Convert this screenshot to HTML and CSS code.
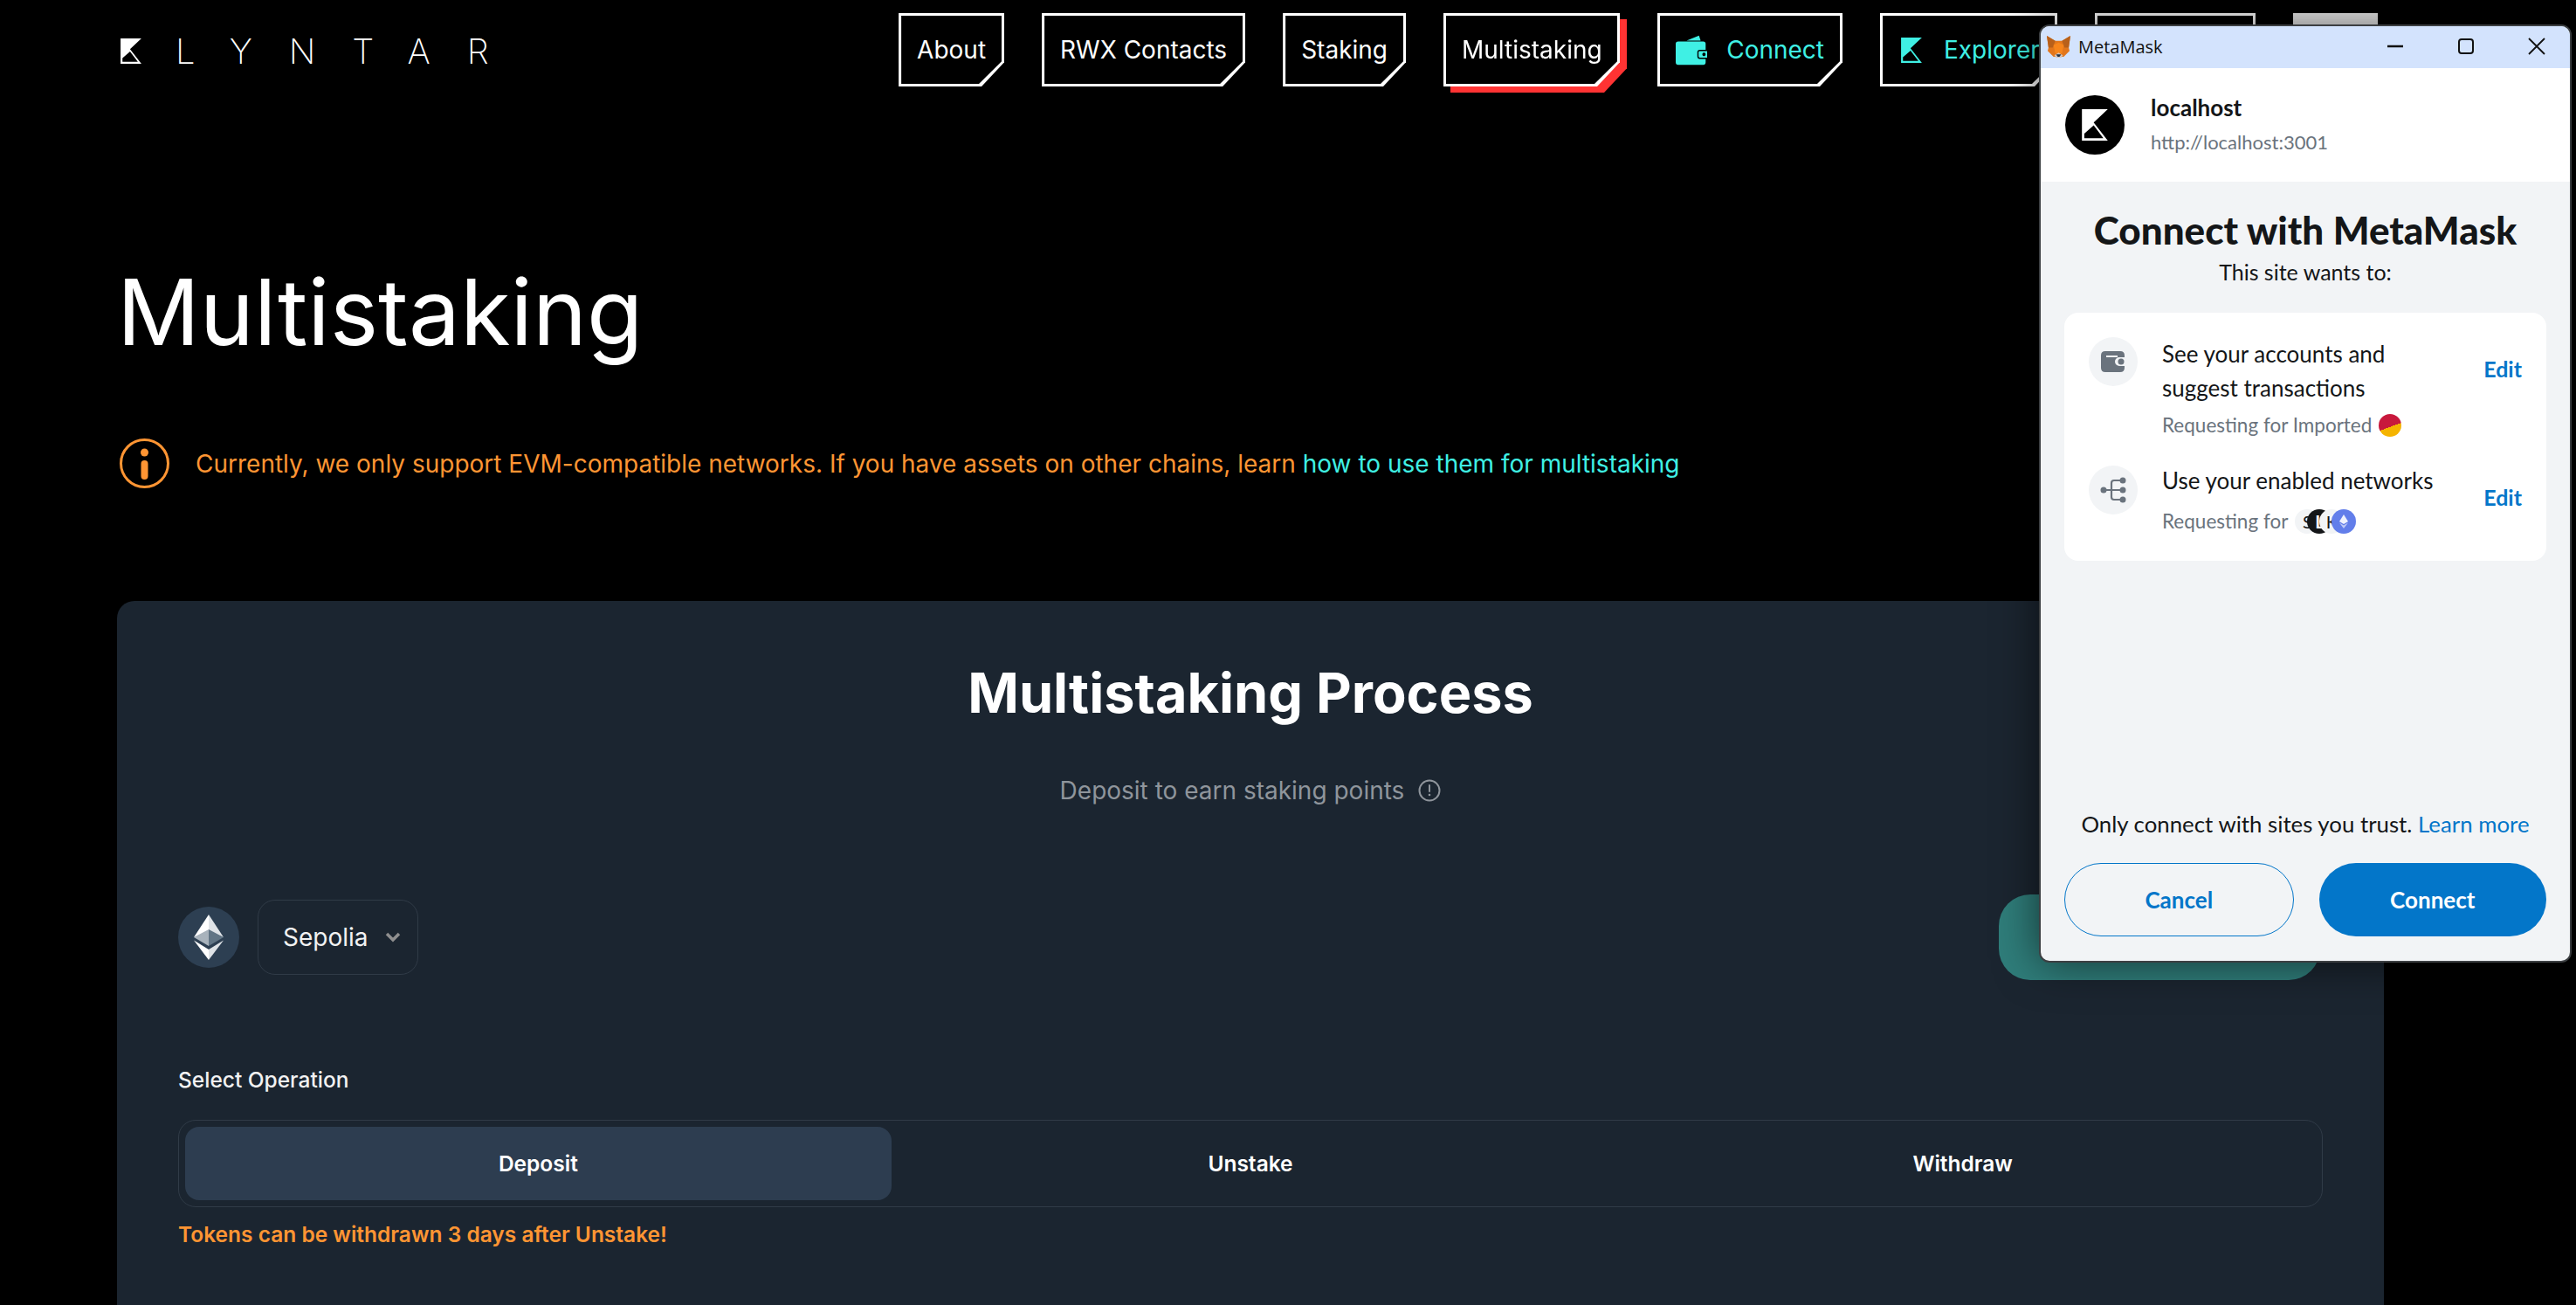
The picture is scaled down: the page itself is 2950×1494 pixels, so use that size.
FILE: index.html
```html
<!DOCTYPE html>
<html lang="en">
<head>
<meta charset="UTF-8">
<meta name="viewport" content="width=device-width, initial-scale=1.0">
<title>Klyntar - Multistaking</title>
<link rel="stylesheet" href="styles.css">
</head>
<body>
  <svg class="defs" width="0" height="0">
    <symbol id="kmark" viewBox="0 0 88 107">
      <path fill-rule="evenodd" d="M0 0H88L40 45L88 107H0ZM8 99H73L40 55L8 83Z"/>
    </symbol>
  </svg>

  <header class="topbar">
    <a class="logo">
      <svg class="logo-mark"><use href="#kmark"/></svg>
      <span class="logo-text">LYNTAR</span>
    </a>
    <nav class="nav">
      <a class="nav-item"><span>About</span></a>
      <a class="nav-item"><span>RWX Contacts</span></a>
      <a class="nav-item"><span>Staking</span></a>
      <div class="nav-current"><a class="nav-item"><span>Multistaking</span></a></div>
      <a class="nav-item nav-teal nav-connect">
        <svg class="nav-wallet" viewBox="0 0 38 36">
          <path d="M13 7L28 1L30 7Z"/>
          <path fill-rule="evenodd" d="M3 8H33Q36 8 36 11V18H29Q26 18 26 21V26Q26 29 29 29H36V33Q36 36 33 36H3Q0 36 0 33V11Q0 8 3 8Z"/>
          <path fill-rule="evenodd" d="M29 19.500H38V27.500H29Q27.500 27.500 27.500 26V21Q27.500 19.500 29 19.500ZM32 23.500A2 2 0 1 0 32 23.490Z"/>
        </svg>
        <span>Connect</span>
      </a>
      <a class="nav-item nav-teal nav-explorer">
        <svg class="nav-kmark"><use href="#kmark"/></svg>
        <span>Explorer</span>
      </a>
      <a class="nav-item nav-hidden"></a>
      <a class="nav-lang"></a>
    </nav>
  </header>

  <main class="content">
    <h1 class="page-title">Multistaking</h1>

    <div class="notice">
      <svg class="notice-icon" viewBox="0 0 57 57" fill="none">
        <circle cx="28.500" cy="28.500" r="27" stroke="#ff9533" stroke-width="3"/>
        <circle cx="28.500" cy="16" r="4.500" fill="#ff9533"/>
        <rect x="24.500" y="25" width="8" height="22" rx="4" fill="#ff9533"/>
      </svg>
      <p>Currently, we only support EVM-compatible networks. If you have assets on other chains, learn <a>how to use them for multistaking</a></p>
    </div>

    <section class="card">
      <h2 class="card-title">Multistaking Process</h2>
      <div class="card-sub">
        <span>Deposit to earn staking points</span>
        <svg width="26" height="26" viewBox="0 0 26 26" fill="none">
          <circle cx="13" cy="13" r="11.500" stroke="#8f959c" stroke-width="2"/>
          <path d="M13 7V14" stroke="#8f959c" stroke-width="2" stroke-linecap="round"/>
          <circle cx="13" cy="18" r="1.300" fill="#8f959c"/>
        </svg>
      </div>

      <div class="chain-row">
        <div class="chain-icon">
          <svg width="34" height="52" viewBox="0 0 34 52">
            <path fill="#fff" d="M17 0L0 26L17 19Z"/>
            <path fill="#dfe3e7" d="M17 0L34 26L17 19Z"/>
            <path fill="#a9b3bc" d="M17 17L0 26L17 36Z"/>
            <path fill="#627585" d="M17 17L34 26L17 36Z"/>
            <path fill="#fff" d="M0 29.500L17 52V40Z"/>
            <path fill="#dfe3e7" d="M34 29.500L17 52V40Z"/>
          </svg>
        </div>
        <button class="chain-select">
          <span>Sepolia</span>
          <svg width="18" height="12" viewBox="0 0 18 12" fill="none"><path d="M2 2L9 9L16 2" stroke="#8f8f8f" stroke-width="3.500"/></svg>
        </button>
        <div class="connect-wallet"></div>
      </div>

      <div class="field-label">Select Operation</div>
      <div class="tabs">
        <button class="tab tab-active">Deposit</button>
        <button class="tab">Unstake</button>
        <button class="tab">Withdraw</button>
      </div>
      <p class="warning">Tokens can be withdrawn 3 days after Unstake!</p>
    </section>
  </main>

  <!-- metamask popup, sits on top of the page -->
  <div class="mm-window">
    <div class="mm-titlebar">
      <svg class="mm-fox" viewBox="0 0 30 28">
        <path fill="#e2761b" d="M1 1L11 7H19L29 1L27 15L28 19L21 26H9L2 19L3 15Z"/>
        <path fill="#b8601a" d="M1 1L11 7L8 15L3 15Z"/>
        <path fill="#b8601a" d="M29 1L19 7L22 15L27 15Z"/>
        <path fill="#f6851b" d="M9 12L15 9L21 12L19 22H11Z"/>
        <path fill="#d7c1b3" d="M10 24L15 21L20 24L18 27H12Z"/>
        <path fill="#233447" d="M12 23H18L16 26H14Z"/>
      </svg>
      <span class="mm-app">MetaMask</span>
      <div class="mm-controls">
        <svg width="20" height="20" viewBox="0 0 20 20"><path d="M1 10H19" stroke="#111" stroke-width="2.500"/></svg>
        <svg width="20" height="20" viewBox="0 0 20 20" fill="none"><rect x="2" y="2" width="16" height="16" rx="3" stroke="#111" stroke-width="2"/></svg>
        <svg width="20" height="20" viewBox="0 0 20 20"><path d="M1 1L19 19M19 1L1 19" stroke="#111" stroke-width="1.800"/></svg>
      </div>
    </div>

    <div class="mm-site">
      <div class="mm-avatar"><svg width="30" height="36"><use href="#kmark"/></svg></div>
      <div>
        <div class="mm-host">localhost</div>
        <div class="mm-url">http://localhost:3001</div>
      </div>
    </div>

    <div class="mm-body">
      <h3 class="mm-heading">Connect with MetaMask</h3>
      <p class="mm-lead">This site wants to:</p>

      <div class="mm-perms">
        <div class="perm perm-accounts">
          <div class="perm-icon">
            <svg width="28" height="26" viewBox="0 0 28 26">
              <path fill="#6a737d" fill-rule="evenodd" d="M5 1H22Q27 1 27 6V8H21A5 5 0 0 0 21 18H27V20Q27 25 22 25H5Q0 25 0 20V6Q0 1 5 1ZM6 6V8H19V6Z"/>
              <circle cx="23" cy="13" r="3.500" fill="#6a737d"/>
            </svg>
          </div>
          <div class="perm-text">
            <div class="perm-title">See your accounts and<br>suggest transactions</div>
            <div class="perm-req">Requesting for Imported <span class="acct-dot"></span></div>
          </div>
          <a class="perm-edit">Edit</a>
        </div>
        <div class="perm perm-networks">
          <div class="perm-icon">
            <svg width="30" height="30" viewBox="0 0 30 30" fill="none">
              <path d="M5 15H24M25 4H16Q13 4 13 7V23Q13 26 16 26H25" stroke="#6a737d" stroke-width="2.200"/>
              <circle cx="4" cy="15" r="3.500" fill="#6a737d"/>
              <circle cx="26" cy="4" r="3.500" fill="#6a737d"/>
              <circle cx="26" cy="15" r="3.500" fill="#6a737d"/>
              <circle cx="26" cy="26" r="3.500" fill="#6a737d"/>
            </svg>
          </div>
          <div class="perm-text">
            <div class="perm-title">Use your enabled networks</div>
            <div class="perm-req">
              <span class="req-label">Requesting for</span>
              <span class="net-stack">
                <span class="net net-grey">S</span>
                <span class="net net-black">L</span>
                <span class="net net-grey">K</span>
                <span class="net net-eth">
                  <svg width="10" height="16" viewBox="0 0 10 16"><path fill="#fff" opacity=".9" d="M5 0L10 8L5 11L0 8Z"/><path fill="#fff" opacity=".6" d="M0 9.500L5 16L10 9.500L5 12.500Z"/></svg>
                </span>
              </span>
            </div>
          </div>
          <a class="perm-edit">Edit</a>
        </div>
      </div>

      <p class="mm-trust">Only connect with sites you trust. <a>Learn more</a></p>
      <div class="mm-actions">
        <button class="mm-btn mm-cancel">Cancel</button>
        <button class="mm-btn mm-connect">Connect</button>
      </div>
    </div>
  </div>
</body>
</html>
```

FILE: styles.css
```css
* {
  box-sizing: border-box;
}
html, body {
  height: 1494px;
  overflow: hidden;
}
body {
  margin: 0;
  background-color: #000;
  color: #fff;
  font-family: Inter, "Liberation Sans", sans-serif;
}
button {
  font-family: inherit;
  cursor: pointer;
}
.defs {
  position: absolute;
}

/* top bar */
.topbar {
  display: flex;
  justify-content: space-between;
  align-items: flex-start;
  padding: 15px 227px 0 138px;
}
.logo {
  display: flex;
  align-items: center;
  height: 84px;
  padding-top: 3px;
  fill: #fff;
}
.logo-mark {
  width: 24px;
  height: 29px;
}
.logo-text {
  margin-left: 39px;
  font-size: 40px;
  line-height: 40px;
  font-weight: 200;
  letter-spacing: 41.800px;
}
.nav {
  display: flex;
  gap: 43px;
}
.nav-item {
  position: relative;
  display: flex;
  align-items: center;
  height: 84px;
  padding: 0 21px;
  font-size: 28px;
  color: #fff;
  background-color: #fff;
  clip-path: polygon(0 0, 100% 0, 100% 67%, calc(100% - 26px) 100%, 0 100%);
}
.nav-item::before {
  content: "";
  position: absolute;
  inset: 3px;
  background-color: #000;
  clip-path: polygon(0 0, 100% 0, 100% 67%, calc(100% - 26px) 100%, 0 100%);
}
.nav-item span, .nav-item svg {
  position: relative;
}
.nav-current {
  width: 202px;
  filter: drop-shadow(8px 7px 0 #ff3333);
}
.nav-teal {
  color: #3ff0e4;
  fill: #3ff0e4;
}
.nav-connect {
  width: 212px;
}
.nav-wallet {
  width: 38px;
  height: 36px;
  margin-right: 22px;
}
.nav-explorer {
  width: 203px;
  padding-left: 24px;
  white-space: nowrap;
}
.nav-kmark {
  flex: none;
  width: 24px;
  height: 29px;
  margin-right: 25px;
}
.nav-hidden {
  width: 184px;
}
.nav-lang {
  width: 97px;
  height: 84px;
  background-color: #eee;
}

/* page content */
.content {
  padding: 0 220px 0 134px;
}
.page-title {
  margin: 0;
  padding: 195px 0 0;
  font-size: 105px;
  line-height: 126px;
  font-weight: 400;
}
.notice {
  display: flex;
  align-items: center;
  gap: 30px;
  margin: 82px 0 0 3px;
  font-size: 28px;
  color: #ff9533;
}
.notice p {
  margin: 0;
}
.notice a {
  color: #3ff0e4;
}
.notice-icon {
  flex: none;
  width: 57px;
  height: 57px;
}
.card {
  margin-top: 129px;
  height: 900px;
  padding: 65px 70px 0;
  background-color: #1b2530;
  border-radius: 20px;
}
.card-title {
  margin: 0;
  text-align: center;
  font-size: 63px;
  line-height: 80px;
  font-weight: 700;
}
.card-sub {
  display: flex;
  justify-content: center;
  align-items: center;
  gap: 16px;
  margin-top: 52px;
  font-size: 28px;
  line-height: 40px;
  color: #8f959c;
}
.chain-row {
  display: flex;
  align-items: center;
  gap: 21px;
  margin-top: 99px;
}
.chain-icon {
  display: flex;
  align-items: center;
  justify-content: center;
  width: 70px;
  height: 70px;
  border-radius: 50%;
  background-color: #2d3f52;
}
.chain-select {
  display: flex;
  align-items: center;
  gap: 19px;
  width: 184px;
  height: 86px;
  padding: 0 0 0 28px;
  font-size: 28px;
  color: #f2f2f2;
  background: none;
  border: 1px solid #303b47;
  border-radius: 20px;
}
.connect-wallet {
  width: 368px;
  height: 98px;
  margin-left: auto;
  margin-right: 3px;
  background-color: #2f7d7a;
  border-radius: 36px;
}
.field-label {
  margin-top: 98px;
  font-size: 24.500px;
  line-height: 32px;
  font-weight: 500;
  color: #f2f2f2;
}
.tabs {
  display: grid;
  grid-template-columns: repeat(3, 1fr);
  gap: 7px;
  height: 100px;
  margin-top: 30px;
  padding: 7px;
  border: 1px solid #303b47;
  border-radius: 20px;
}
.tab {
  font-size: 24.500px;
  font-weight: 600;
  color: #fff;
  background: none;
  border: none;
  border-radius: 16px;
}
.tab-active {
  background-color: #2d3d50;
}
.warning {
  margin: 15px 0 0;
  font-size: 24.500px;
  line-height: 32px;
  font-weight: 600;
  color: #ff9533;
}

/* metamask window */
.mm-window {
  position: absolute;
  left: 2335px;
  top: 28px;
  display: flex;
  flex-direction: column;
  width: 610px;
  height: 1074px;
  overflow: hidden;
  color: #141618;
  font-family: Lato, "Noto Sans", sans-serif;
  background-color: #f2f4f6;
  border: 2px solid #3c3f42;
  border-radius: 12px;
  box-shadow: 0 0 50px rgba(0, 0, 0, 0.6);
}
.mm-titlebar {
  display: flex;
  align-items: center;
  flex: none;
  height: 48px;
  padding: 0 0 2px 6px;
  background-color: #d3e3fd;
}
.mm-fox {
  width: 29px;
  height: 27px;
}
.mm-app {
  margin-left: 8px;
  font-family: "Open Sans", sans-serif;
  font-size: 20px;
  color: #111;
}
.mm-controls {
  display: flex;
  gap: 61px;
  margin-left: auto;
  margin-right: 28px;
}
.mm-site {
  display: flex;
  align-items: center;
  gap: 30px;
  flex: none;
  height: 130px;
  padding: 0 0 0 28px;
  background-color: #fff;
}
.mm-avatar {
  display: flex;
  align-items: center;
  justify-content: center;
  width: 68px;
  height: 68px;
  fill: #fff;
  background-color: #000;
  border-radius: 50%;
}
.mm-host {
  margin-top: -2px;
  font-size: 26px;
  line-height: 32px;
  font-weight: 700;
}
.mm-url {
  margin-top: 10px;
  font-size: 22px;
  line-height: 28px;
  color: #6a737d;
}
.mm-body {
  display: flex;
  flex-direction: column;
  flex: 1;
  padding: 30px 27px 28px;
}
.mm-heading {
  margin: 0;
  text-align: center;
  font-size: 44px;
  line-height: 50px;
  font-weight: 900;
}
.mm-lead {
  margin: 8px 0 0;
  text-align: center;
  font-size: 25px;
  line-height: 30px;
}
.mm-perms {
  margin-top: 32px;
  height: 284px;
  padding: 28px;
  background-color: #fff;
  border-radius: 16px;
}
.perm {
  display: flex;
  align-items: flex-start;
}
.perm-networks {
  margin-top: 31px;
}
.perm-networks .perm-title {
  margin-top: -2px;
}
.perm-networks .perm-req {
  margin-top: 12px;
}
.perm-icon {
  display: flex;
  align-items: center;
  justify-content: center;
  flex: none;
  width: 56px;
  height: 56px;
  background-color: #f2f4f6;
  border-radius: 50%;
}
.perm-text {
  flex: 1;
  margin-left: 28px;
}
.perm-title {
  font-size: 26px;
  line-height: 39px;
}
.perm-req {
  display: flex;
  align-items: center;
  gap: 8px;
  margin-top: 8px;
  font-size: 22.500px;
  line-height: 30px;
  color: #6a737d;
}
.perm-edit {
  margin-top: 20px;
  font-size: 25px;
  line-height: 32px;
  font-weight: 700;
  color: #0376c9;
}
.acct-dot {
  width: 26px;
  height: 26px;
  border-radius: 50%;
  background: linear-gradient(160deg, #c8183c 0 55%, #f5b400 55%);
}
.net-stack {
  display: flex;
}
.net {
  display: flex;
  align-items: center;
  justify-content: center;
  width: 28px;
  height: 28px;
  margin-right: -14px;
  font-size: 20px;
  color: #141618;
  border-radius: 50%;
}
.net-grey {
  background-color: #f2f4f6;
}
.net-black {
  color: #fff;
  font-weight: 700;
  background-color: #141618;
}
.net-eth {
  background-color: #627eea;
}
.mm-trust {
  margin: auto 0 0;
  text-align: center;
  font-size: 25.800px;
  line-height: 30px;
}
.mm-trust a {
  color: #0376c9;
}
.mm-actions {
  display: flex;
  gap: 29px;
  margin-top: 30px;
}
.mm-btn {
  flex: 1;
  height: 84px;
  font-family: inherit;
  font-size: 26px;
  font-weight: 700;
  border-radius: 42px;
}
.mm-cancel {
  color: #0376c9;
  background: none;
  border: 1px solid #0376c9;
}
.mm-connect {
  color: #fff;
  background-color: #0376c9;
  border: none;
}
```
